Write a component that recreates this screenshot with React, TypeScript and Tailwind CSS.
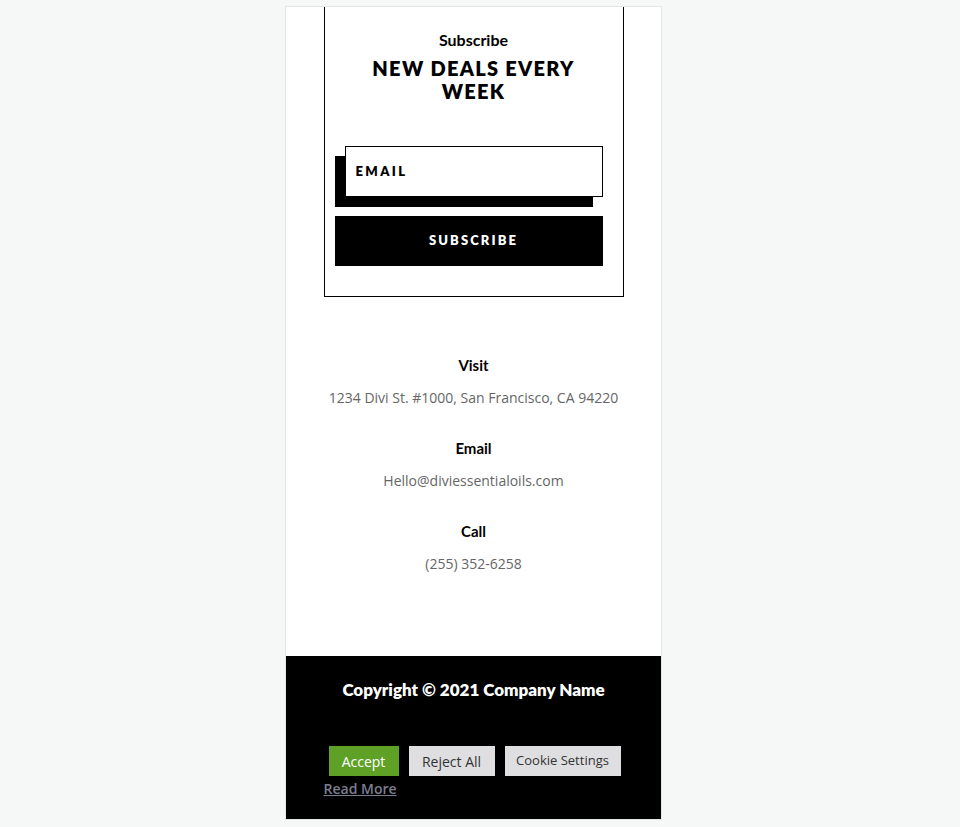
export default function App() {
  return (
    <div className="min-h-screen bg-[#f6f8f7] pt-[6px]">
      <div className="ml-[285px] w-[377px] border border-[#e4e6e5] bg-white">
        {/* Subscribe box */}
        <div className="mx-auto w-[300px] border border-t-0 border-black pl-[10px] pr-[20px] pt-[23px] pb-[30px] font-['Lato',sans-serif] text-black">
          <p className="pl-[10px] text-center text-[16px] font-bold leading-[20px]">Subscribe</p>
          <h2 className="mt-[7px] pl-[10px] text-center text-[20px] font-extrabold leading-[23px] tracking-[1.3px]">
            NEW DEALS EVERY
            <br />
            WEEK
          </h2>
          <div className="mt-[43px] ml-[10px] flex h-[51px] w-[258px] items-center border border-black bg-white pl-[10px] shadow-[-10px_10px_0_#000]">
            <span className="text-[13px] font-extrabold tracking-[2.4px]">EMAIL</span>
          </div>
          <button className="mt-[19px] flex h-[50px] w-[268px] items-center justify-center bg-black pl-[10px] text-[13px] font-extrabold tracking-[2.1px] text-white">
            SUBSCRIBE
          </button>
        </div>

        {/* Contact */}
        <div className="flex flex-col items-center pt-[58px] pb-[82px] text-center">
          <p className="font-['Lato',sans-serif] text-[15px] font-bold leading-[20px] text-black">Visit</p>
          <p className="mt-[13px] font-['Open_Sans',sans-serif] text-[14px] leading-[20px] text-[#666]">
            1234 Divi St. #1000, San Francisco, CA 94220
          </p>
          <p className="mt-[30px] font-['Lato',sans-serif] text-[15px] font-bold leading-[20px] text-black">Email</p>
          <p className="mt-[13px] font-['Open_Sans',sans-serif] text-[14px] leading-[20px] text-[#666]">
            Hello@diviessentialoils.com
          </p>
          <p className="mt-[30px] font-['Lato',sans-serif] text-[15px] font-bold leading-[20px] text-black">Call</p>
          <p className="mt-[13px] font-['Open_Sans',sans-serif] text-[14px] leading-[20px] text-[#666]">(255) 352-6258</p>
        </div>

        {/* Footer */}
        <footer className="bg-black pt-[24px] pb-[22px]">
          <p className="text-center font-['Lato',sans-serif] text-[17px] font-extrabold leading-[20px] text-white">
            Copyright © 2021 Company Name
          </p>
          <div className="mx-auto mt-[41px] w-[300px] font-['Open_Sans',sans-serif]">
            <div className="flex">
              <button className="m-[5px] h-[30px] w-[70px] shrink-0 bg-[#5fa126] text-[14px] text-white">Accept</button>
              <button className="m-[5px] h-[30px] w-[86px] shrink-0 bg-[#dfdfe1] text-[14px] text-[#333]">Reject All</button>
              <button className="m-[5px] h-[30px] w-[116px] shrink-0 bg-[#dfdfe1] text-[13px] text-[#333]">Cookie Settings</button>
            </div>
            <a className="block text-[14px] font-semibold leading-[16px] text-[#7d7d90] underline">Read More</a>
          </div>
        </footer>
      </div>
    </div>
  )
}
